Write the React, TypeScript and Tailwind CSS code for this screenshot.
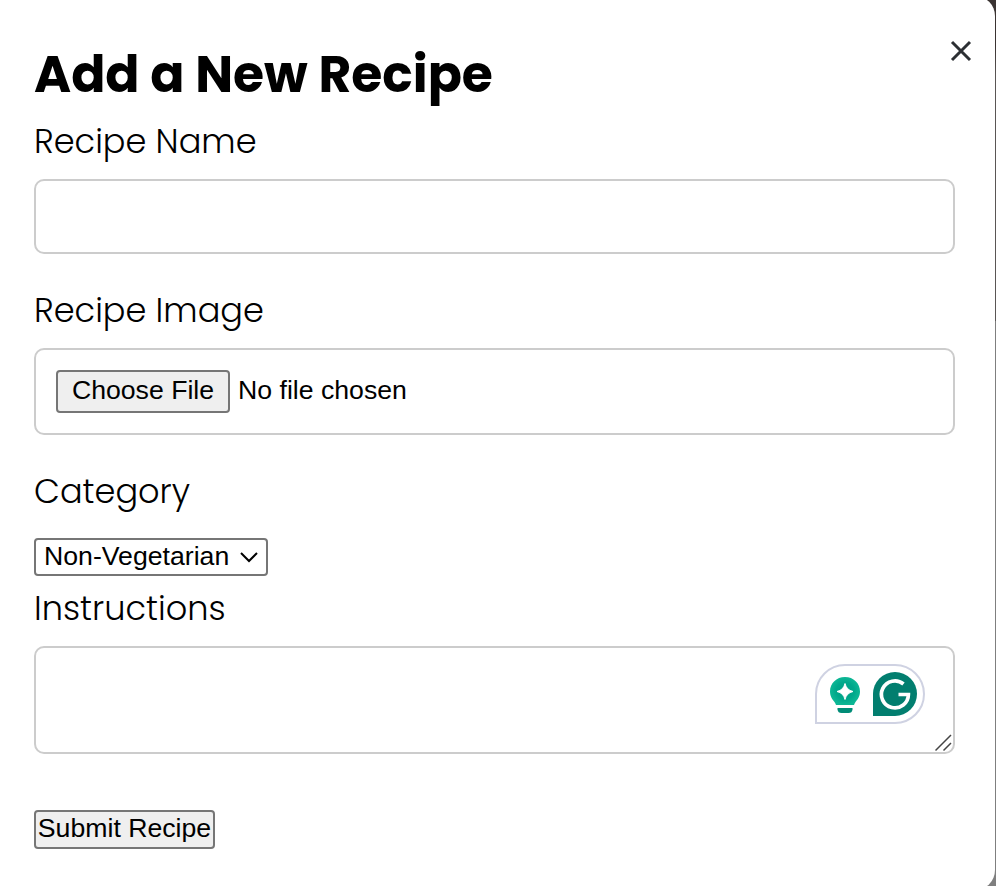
import React from "react";

function Label({ text, className }: { text: string; className: string }) {
  return (
    <div className={`whitespace-nowrap text-[33.6px] leading-[50px] font-light ${className}`}>
      {text}
    </div>
  );
}

function Assistant() {
  return (
    <svg width="110" height="60" viewBox="0 0 110 60" className="absolute left-[779px] top-[16px]">
      <path d="M1 59V30A29 29 0 0 1 30 1H80A29 29 0 0 1 80 59Z" fill="#fff" stroke="#cfd2e2" strokeWidth="2" />
      <defs>
        <radialGradient id="bulb">
          <stop offset="0" stopColor="#009f85" />
          <stop offset="0.6" stopColor="#00a88b" />
          <stop offset="1" stopColor="#0db795" />
        </radialGradient>
      </defs>
      <path
        d="M30 13C21.500 13 15 19.200 15 27.500C15 32.500 17.500 35.500 19.500 38Q20.500 39.500 21 41H39Q39.500 39.500 40.500 38C42.500 35.500 45 32.500 45 27.500C45 19.200 38.500 13 30 13Z"
        fill="url(#bulb)"
      />
      <path d="M22.500 44H37.500V45.500Q37 49 33.500 49H26.500Q23 49 22.500 45.500Z" fill="#008c77" />
      <path
        d="M30 19.500Q31.500 26 38 27.500Q31.500 29 30 35.500Q28.500 29 22 27.500Q28.500 26 30 19.500Z"
        fill="#fff"
        stroke="#fff"
        strokeLinejoin="round"
      />
      <path d="M58 52V30A22 22 0 1 1 80 52Z" fill="#027e6f" />
      <path d="M88.500 20A13.500 13.500 0 1 0 93.400 30.500H83.500" fill="none" stroke="#fff" strokeWidth="3.700" />
    </svg>
  );
}

export default function App() {
  return (
    <div className="h-[886px] w-[996px] overflow-hidden bg-[linear-gradient(to_bottom,#3a3332_0px,#3a3332_45px,#5a5655_75px,#5a5655_321px,#7f7f7f_321px)] text-black">
      <div className="-ml-[9px] -mt-[4px] flex h-[894px] w-[1004px] flex-col items-start rounded-[20px] bg-white pl-[43px] pt-[4px] font-['Poppins','Inter',sans-serif]">
        <div className="flex h-[112px] w-[940px] justify-between">
          <h1 className="mt-[38px] whitespace-nowrap text-[50.4px] leading-[74px] font-bold">
            Add a New Recipe
          </h1>
          <svg width="22" height="22" viewBox="0 0 22 22" className="mt-[40px] mr-[2px]">
            <path d="M2 2L20 20M20 2L2 20" stroke="#2c2f33" strokeWidth="3" />
          </svg>
        </div>
        <Label text="Recipe Name" className="h-[67px] pt-[5px]" />
        <input className="h-[75px] w-[921px] shrink-0 rounded-[10px] border-2 border-[#ccc] px-5 outline-none" />
        <Label text="Recipe Image" className="h-[94px] pt-[32px]" />
        <div className="flex h-[87px] w-[921px] shrink-0 items-center rounded-[10px] border-2 border-[#ccc] pl-5 font-['Liberation_Sans',sans-serif] text-[26.67px]">
          <button className="h-[43px] w-[174px] rounded-[4px] border-2 border-[#767676] bg-[#efefef] pb-[2px] leading-[37px] whitespace-nowrap">
            Choose File
          </button>
          <span className="ml-[8px] pb-[4px]">No file chosen</span>
        </div>
        <Label text="Category" className="h-[103px] pt-[32px]" />
        <div className="flex h-[38px] w-[234px] shrink-0 items-center rounded-[4px] border-2 border-[#767676] pl-2 font-['Liberation_Sans',sans-serif] text-[26.67px] leading-[34px]">
          <span className="pb-[2px]">Non-Vegetarian</span>
          <svg width="18" height="12" viewBox="0 0 18 12" className="ml-[11px]">
            <path d="M1 2L9 10L17 2" fill="none" stroke="#000" strokeWidth="2" />
          </svg>
        </div>
        <Label text="Instructions" className="h-[70px] pt-[8px]" />
        <div className="relative h-[108px] w-[921px] shrink-0 rounded-[10px] border-2 border-[#ccc]">
          <Assistant />
          <svg width="18" height="18" viewBox="0 0 18 18" className="absolute right-0 bottom-0">
            <path d="M0.500 16.500L16 1M8.500 16.500L16 9" stroke="#444" strokeWidth="1.500" />
          </svg>
        </div>
        <button className="mt-[56px] h-[39px] w-[181px] shrink-0 rounded-[4px] border-2 border-[#767676] bg-[#efefef] pb-[2px] font-['Liberation_Sans',sans-serif] text-[26.67px] leading-[33px] whitespace-nowrap">
          Submit Recipe
        </button>
      </div>
    </div>
  );
}
